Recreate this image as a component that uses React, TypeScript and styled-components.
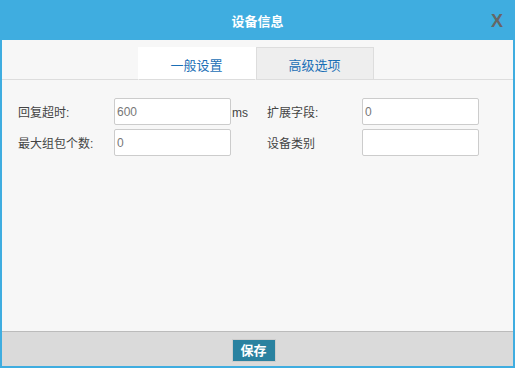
import React from "react";
import styled, { createGlobalStyle } from "styled-components";

const GlobalStyle = createGlobalStyle`
  html, body {
    margin: 0;
    padding: 0;
    background: #ffffff;
  }
  body {
    font-family: "Liberation Sans", "Noto Sans CJK SC", sans-serif;
  }
`;

const App = () => {
  return (
    <>
      <GlobalStyle />
      <Dialog>
        <Header>
          <Title>设备信息</Title>
          <CloseButton>X</CloseButton>
        </Header>
        <Body>
          <TabBar>
            <Tab active>一般设置</Tab>
            <Tab>高级选项</Tab>
          </TabBar>
          <Form>
            <Label>回复超时:</Label>
            <Input defaultValue="600" />
            <Unit>ms</Unit>
            <Label>扩展字段:</Label>
            <Input defaultValue="0" />

            <Label>最大组包个数:</Label>
            <Input defaultValue="0" />
            <Unit />
            <Label>设备类别</Label>
            <Input defaultValue="" />
          </Form>
        </Body>
        <Footer>
          <SaveButton>保存</SaveButton>
        </Footer>
      </Dialog>
    </>
  );
};

export default App;

const Dialog = styled.div`
  display: flex;
  flex-direction: column;
  width: 515px;
  height: 368px;
  box-sizing: border-box;
  border: 2px solid #3fade0;
  border-top: 0;
  background: #f7f7f7;
`;

const Header = styled.div`
  position: relative;
  display: flex;
  justify-content: center;
  align-items: center;
  height: 40px;
  margin: 0 -2px;
  background: #3fade0;
`;

const Title = styled.div`
  color: #ffffff;
  font-size: 13px;
  font-weight: bold;
`;

const CloseButton = styled.div`
  position: absolute;
  right: 12px;
  top: 10px;
  color: #666666;
  font-family: "Liberation Sans", Arial, sans-serif;
  font-size: 18px;
  font-weight: bold;
  line-height: 22px;
  cursor: pointer;
`;

const Body = styled.div`
  flex: 1;
  display: flex;
  flex-direction: column;
`;

const TabBar = styled.div`
  display: flex;
  justify-content: center;
  padding: 7px 4px 0 0;
  border-bottom: 1px solid #dddddd;
`;

const Tab = styled.div<{ active?: boolean }>`
  display: flex;
  justify-content: center;
  align-items: center;
  width: 118px;
  height: 33px;
  box-sizing: border-box;
  margin-bottom: -1px;
  padding-top: 1px;
  font-size: 13px;
  color: #1a6fb6;
  background: ${(p) => (p.active ? "#ffffff" : "#eeeeee")};
  border: 1px solid ${(p) => (p.active ? "#ffffff" : "#dddddd")};
  border-bottom: 1px solid #dddddd;
`;

const Form = styled.div`
  display: grid;
  grid-template-columns: 96px 117px 36px 95px 117px;
  grid-auto-rows: 27px;
  row-gap: 4px;
  align-items: center;
  padding: 18px 0 0 16px;
`;

const Label = styled.div`
  font-size: 12px;
  color: #444444;
  white-space: nowrap;
`;

const Input = styled.input`
  width: 117px;
  height: 27px;
  box-sizing: border-box;
  margin: 0;
  padding: 0 2px;
  border: 1px solid #cccccc;
  border-radius: 2px;
  background: #ffffff;
  font-family: "Liberation Sans", Arial, sans-serif;
  font-size: 12px;
  color: #777777;
  outline: none;
`;

const Unit = styled.div`
  padding-left: 1px;
  padding-top: 2px;
  font-size: 12px;
  color: #444444;
`;

const Footer = styled.div`
  display: flex;
  justify-content: center;
  align-items: flex-start;
  height: 35px;
  padding: 7px 8px 0 0;
  box-sizing: border-box;
  border-top: 1px solid #bbbbbb;
  background: #dadada;
`;

const SaveButton = styled.button`
  width: 44px;
  height: 23px;
  margin: 0;
  padding: 0;
  border: 1px solid #cccccc;
  background: #2a82a0;
  color: #ffffff;
  font-family: "Liberation Sans", "Noto Sans CJK SC", sans-serif;
  font-size: 13px;
  font-weight: bold;
  line-height: 21px;
  cursor: pointer;
`;
